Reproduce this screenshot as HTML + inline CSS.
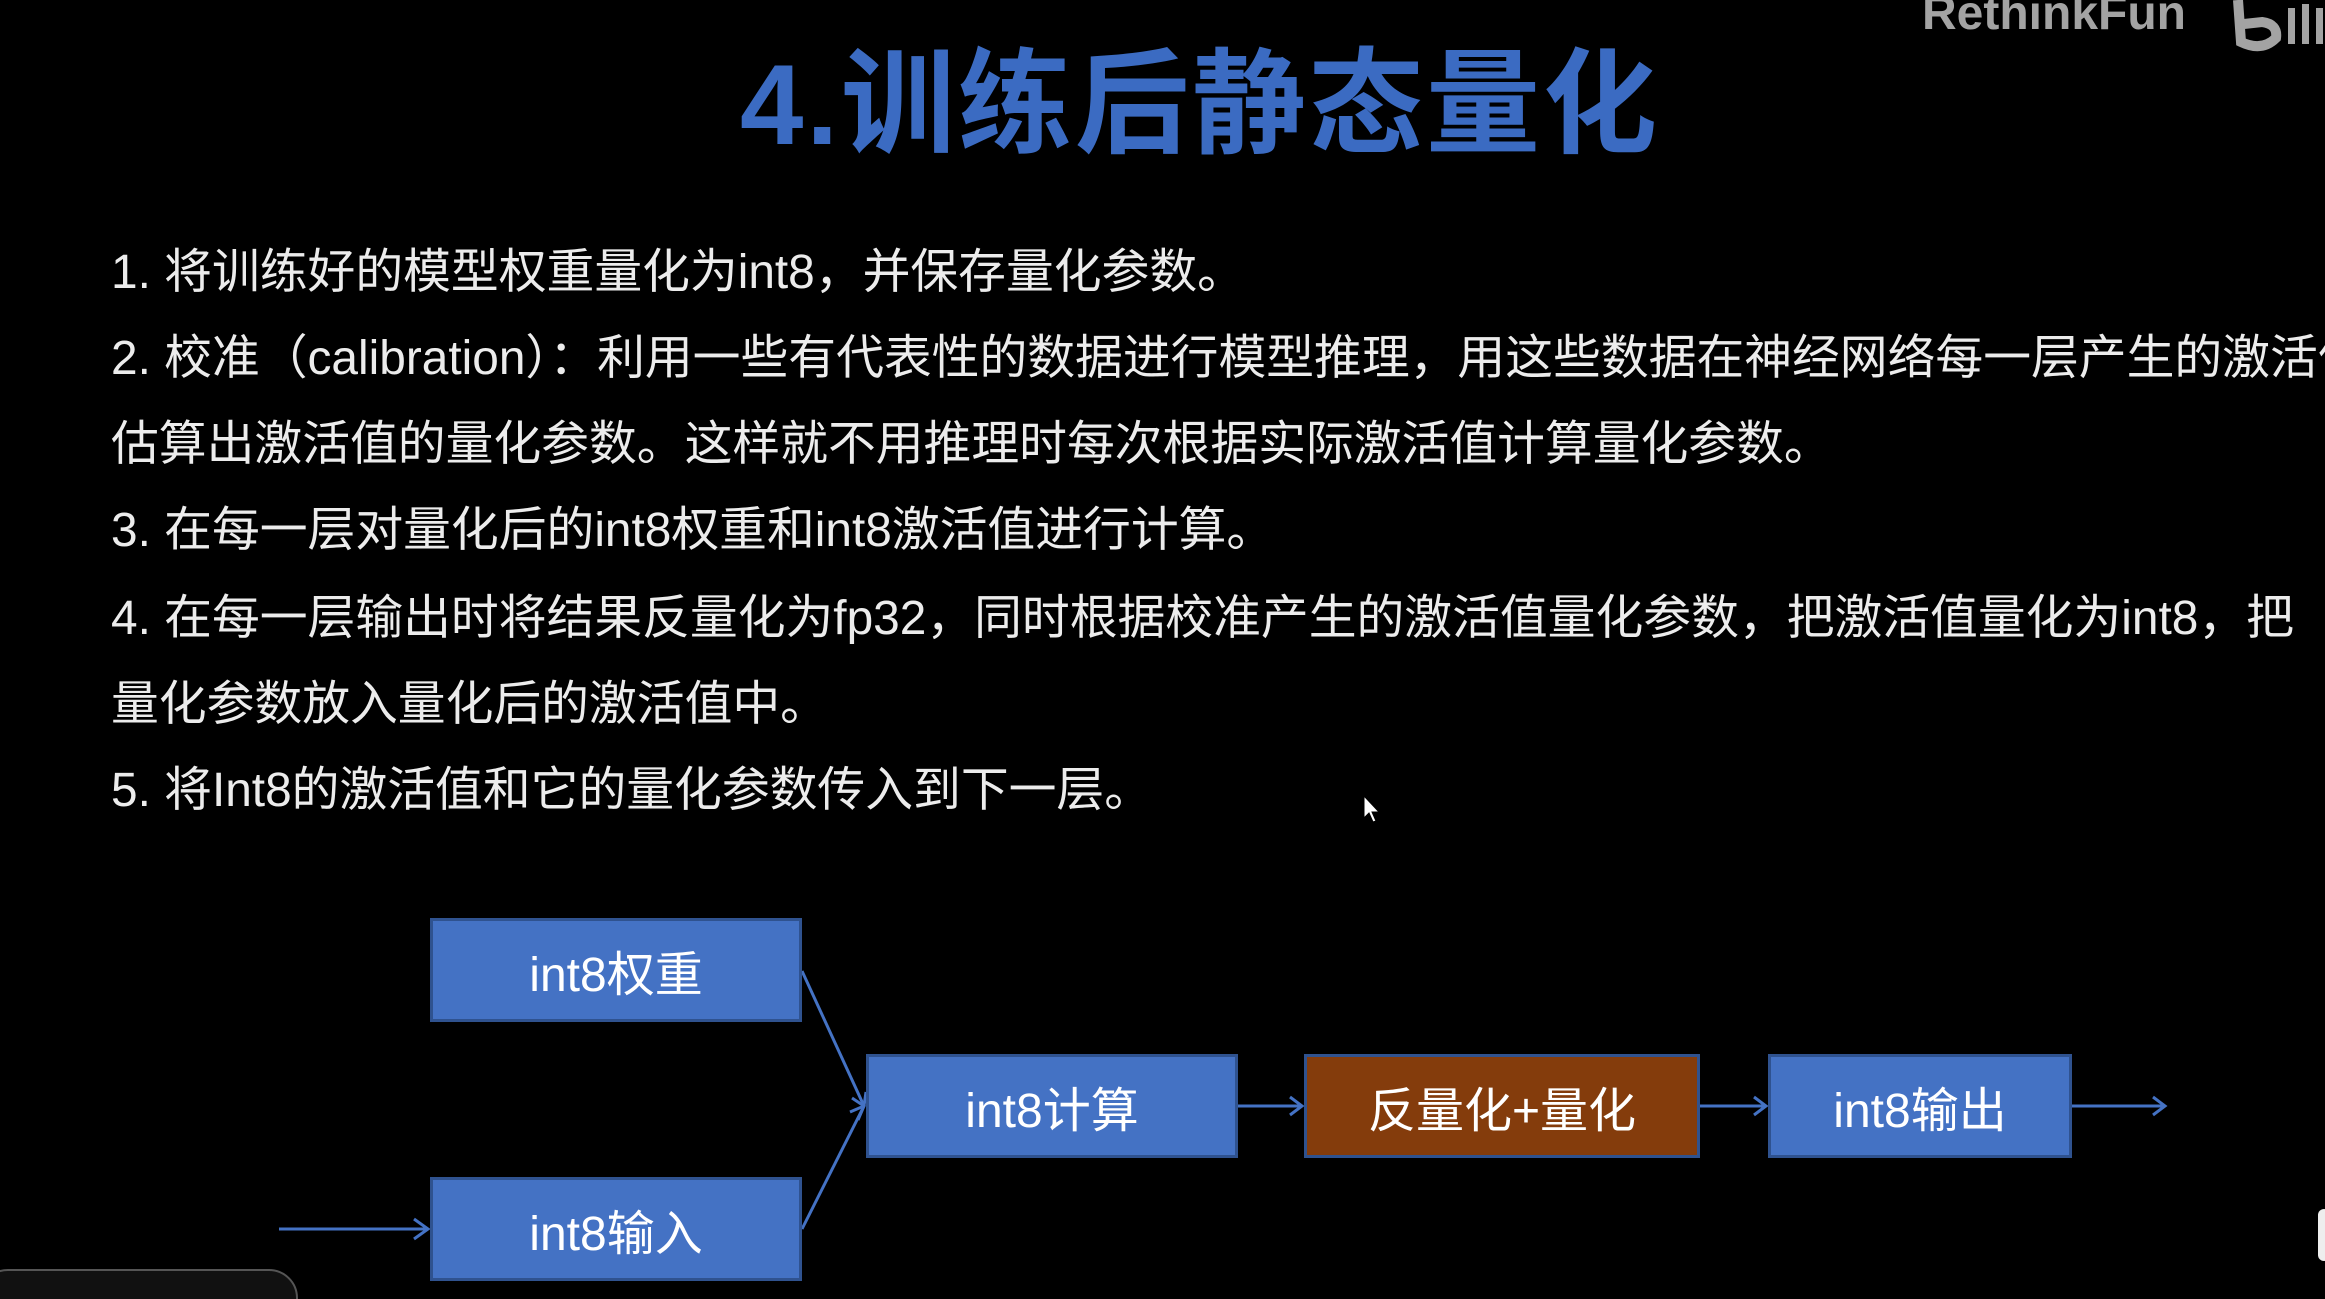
<!DOCTYPE html>
<html><head><meta charset="utf-8"><style>
html,body{margin:0;padding:0;background:#000;}
body{width:2325px;height:1299px;position:relative;overflow:hidden;font-family:"Liberation Sans","Noto Sans CJK SC",sans-serif;}
.title{position:absolute;left:0;width:2400px;text-align:center;top:38px;font-size:114px;font-weight:bold;color:#3b6bc2;line-height:1.2;font-family:"Liberation Sans","Noto Sans CJK SC",sans-serif;letter-spacing:3px;}
.ln{position:absolute;left:111px;font-size:47.8px;color:#ececec;white-space:nowrap;line-height:60px;font-family:"Liberation Sans","Noto Sans CJK SC",sans-serif;}
.box{position:absolute;box-sizing:border-box;background:#4472c4;border:3px solid #2f528f;color:#fff;font-size:48px;display:flex;align-items:center;justify-content:center;font-family:"Liberation Sans","Noto Sans CJK SC",sans-serif;}
.wm{position:absolute;left:1922px;top:-10px;font-size:48px;line-height:1;font-weight:bold;color:#a3a3a3;font-family:"Liberation Sans",sans-serif;}
</style></head><body>
<div class="wm">RethinkFun</div>
<svg style="position:absolute;left:2232px;top:0" width="93" height="52"><path d="M6 0 L9 42 Q30 52 44 38 Q46 24 30 22 L12 24" fill="none" stroke="#a3a3a3" stroke-width="10"/><path d="M22 30 L33 34 L23 40Z" fill="#000"/><rect x="56" y="8" width="7" height="36" fill="#a3a3a3"/><rect x="70" y="4" width="7" height="40" fill="#a3a3a3"/><rect x="84" y="8" width="7" height="36" fill="#a3a3a3"/></svg>
<div class="title">4.训练后静态量化</div>
<div class="ln" style="top:243px">1. 将训练好的模型权重量化为int8，并保存量化参数。</div>
<div class="ln" style="top:329px">2. 校准（calibration）：利用一些有代表性的数据进行模型推理，用这些数据在神经网络每一层产生的激活值</div>
<div class="ln" style="top:415px">估算出激活值的量化参数。这样就不用推理时每次根据实际激活值计算量化参数。</div>
<div class="ln" style="top:501px">3. 在每一层对量化后的int8权重和int8激活值进行计算。</div>
<div class="ln" style="top:589px">4. 在每一层输出时将结果反量化为fp32，同时根据校准产生的激活值量化参数，把激活值量化为int8，把</div>
<div class="ln" style="top:675px">量化参数放入量化后的激活值中。</div>
<div class="ln" style="top:761px">5. 将Int8的激活值和它的量化参数传入到下一层。</div>
<svg style="position:absolute;left:0;top:0" width="2325" height="1299">
<g stroke="#4472c4" stroke-width="3" fill="none">
<line x1="279" y1="1229" x2="428" y2="1229"/><polyline points="414,1219 428,1229 414,1239"/>
<line x1="802" y1="971" x2="864" y2="1106"/><line x1="802" y1="1229" x2="864" y2="1106"/>
<polyline points="852,1098 864,1106 858,1120"/><polyline points="850,1112 864,1106 866,1092"/>
<line x1="1238" y1="1106" x2="1302" y2="1106"/><polyline points="1290,1097 1302,1106 1290,1115"/>
<line x1="1700" y1="1106" x2="1766" y2="1106"/><polyline points="1754,1097 1766,1106 1754,1115"/>
<line x1="2072" y1="1106" x2="2165" y2="1106"/><polyline points="2153,1097 2165,1106 2153,1115"/>
</g>
<path d="M1364 796 L1364 818 L1369 813 L1373 822 L1376 821 L1372 812 L1379 812Z" fill="#fff" stroke="#000" stroke-width="1"/>
<rect x="-20" y="1270" width="317" height="60" rx="28" fill="#111" stroke="#555" stroke-width="2"/>
<rect x="2318" y="1209" width="12" height="52" rx="6" fill="#eee"/>
</svg>
<div class="box" style="left:430px;top:918px;width:372px;height:104px">int8权重</div>
<div class="box" style="left:430px;top:1177px;width:372px;height:104px">int8输入</div>
<div class="box" style="left:866px;top:1054px;width:372px;height:104px">int8计算</div>
<div class="box" style="left:1304px;top:1054px;width:396px;height:104px;background:#843c0c">反量化+量化</div>
<div class="box" style="left:1768px;top:1054px;width:304px;height:104px">int8输出</div>
</body></html>
